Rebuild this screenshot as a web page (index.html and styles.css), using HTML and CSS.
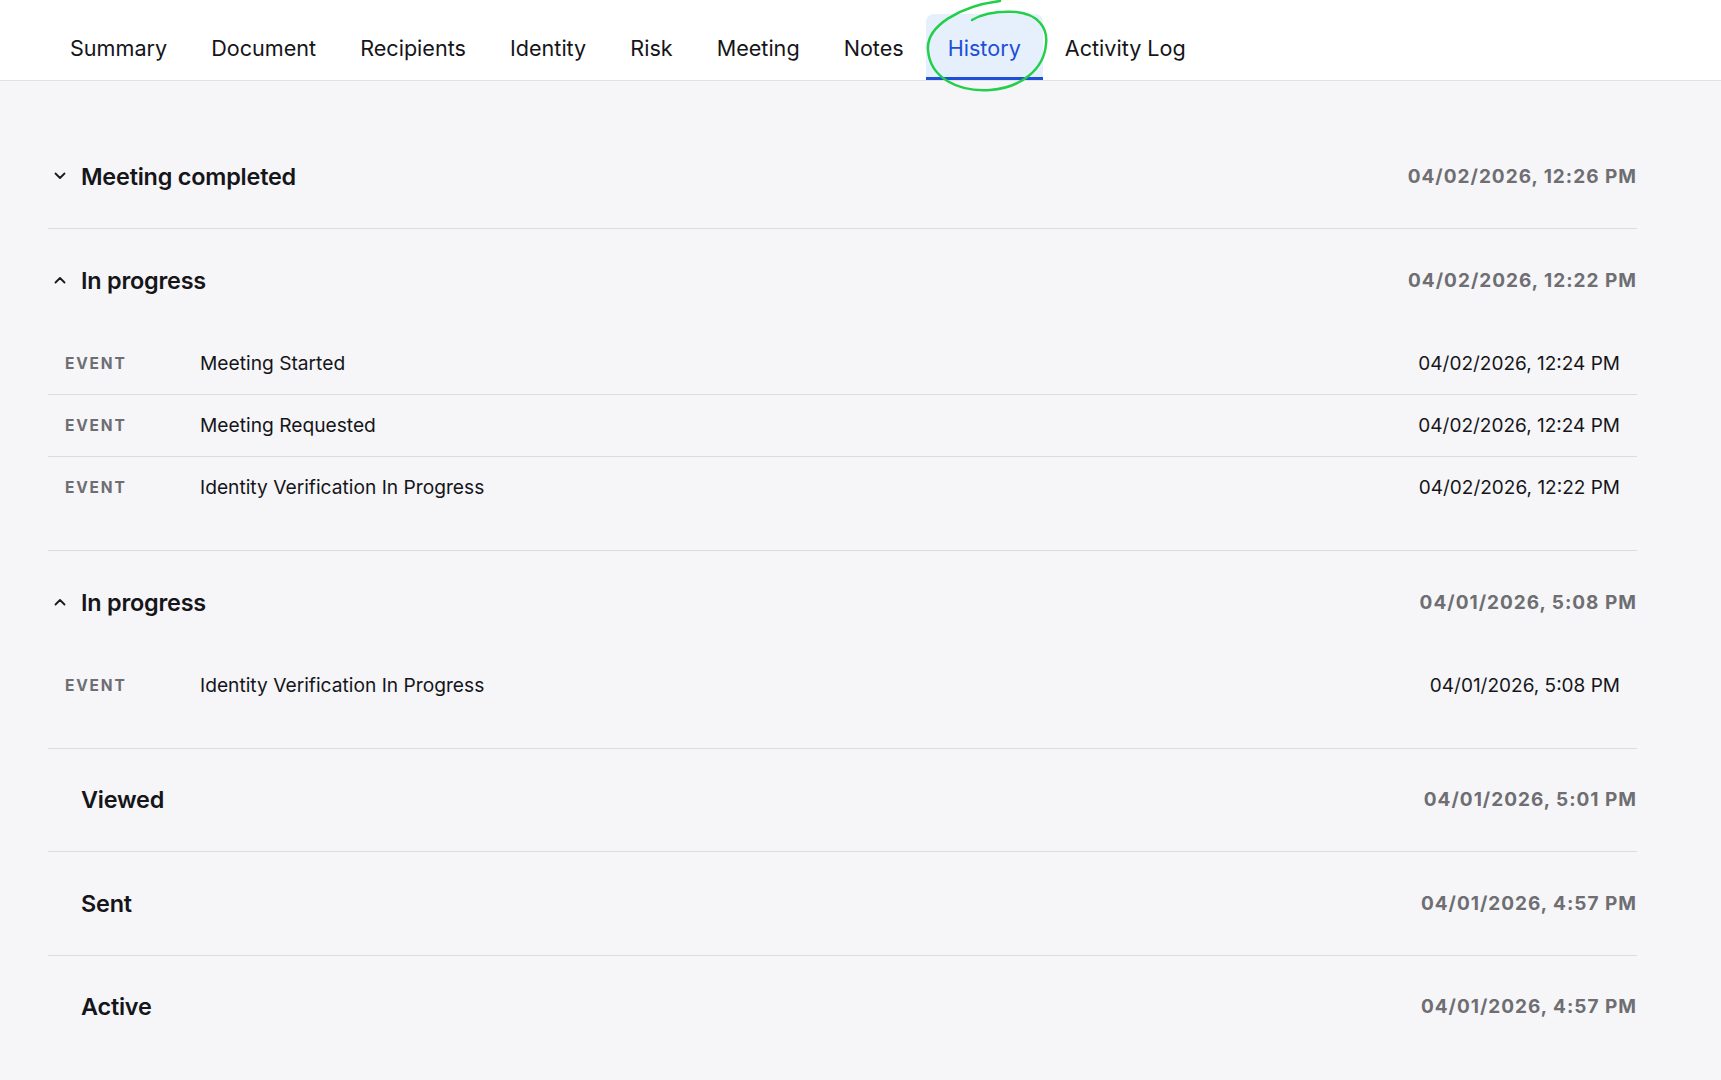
FILE: index.html
```html
<!DOCTYPE html>
<html>
  <head>
    <meta charset="utf-8">
    <title>History</title>
    <link rel="stylesheet" href="styles.css">
  </head>
  <body>
    <header class="tabs">
      <a class="tab">Summary</a>
      <a class="tab">Document</a>
      <a class="tab">Recipients</a>
      <a class="tab">Identity</a>
      <a class="tab">Risk</a>
      <a class="tab">Meeting</a>
      <a class="tab">Notes</a>
      <a class="tab active">History
        <svg class="scribble" viewBox="0 0 135 95" width="135" height="95">
          <path d="M52 20 C62 14 78 11 96 12 C118 14 128 28 126 44 C124 70 100 88 70 90 C38 92 10 78 8 50 C6 26 40 6 80 1" fill="none" stroke="#22cf4a" stroke-width="2.5" stroke-linecap="round"/>
        </svg>
      </a>
      <a class="tab">Activity Log</a>
    </header>

    <main class="history">
      <section class="stage">
        <div class="stage-head">
          <span class="chev">
            <svg viewBox="0 0 12 8" width="12" height="8"><path d="M1.5 1.5 L6 6 L10.5 1.5" fill="none" stroke="#1a1a1f" stroke-width="1.8" stroke-linecap="round" stroke-linejoin="round"/></svg>
          </span>
          <span class="stage-title">Meeting completed</span>
          <span class="stage-time">04/02/2026, 12:26 PM</span>
        </div>
      </section>

      <section class="stage open">
        <div class="stage-head">
          <span class="chev">
            <svg viewBox="0 0 12 8" width="12" height="8"><path d="M1.5 6.5 L6 2 L10.5 6.5" fill="none" stroke="#1a1a1f" stroke-width="1.8" stroke-linecap="round" stroke-linejoin="round"/></svg>
          </span>
          <span class="stage-title">In progress</span>
          <span class="stage-time">04/02/2026, 12:22 PM</span>
        </div>
        <div class="events">
          <div class="event">
            <span class="event-kind">EVENT</span>
            <span class="event-name">Meeting Started</span>
            <span class="event-time">04/02/2026, 12:24 PM</span>
          </div>
          <div class="event">
            <span class="event-kind">EVENT</span>
            <span class="event-name">Meeting Requested</span>
            <span class="event-time">04/02/2026, 12:24 PM</span>
          </div>
          <div class="event">
            <span class="event-kind">EVENT</span>
            <span class="event-name">Identity Verification In Progress</span>
            <span class="event-time">04/02/2026, 12:22 PM</span>
          </div>
        </div>
      </section>

      <section class="stage open">
        <div class="stage-head">
          <span class="chev">
            <svg viewBox="0 0 12 8" width="12" height="8"><path d="M1.5 6.5 L6 2 L10.5 6.5" fill="none" stroke="#1a1a1f" stroke-width="1.8" stroke-linecap="round" stroke-linejoin="round"/></svg>
          </span>
          <span class="stage-title">In progress</span>
          <span class="stage-time">04/01/2026, 5:08 PM</span>
        </div>
        <div class="events">
          <div class="event">
            <span class="event-kind">EVENT</span>
            <span class="event-name">Identity Verification In Progress</span>
            <span class="event-time">04/01/2026, 5:08 PM</span>
          </div>
        </div>
      </section>

      <section class="stage">
        <div class="stage-head">
          <span class="chev"></span>
          <span class="stage-title">Viewed</span>
          <span class="stage-time">04/01/2026, 5:01 PM</span>
        </div>
      </section>

      <section class="stage">
        <div class="stage-head">
          <span class="chev"></span>
          <span class="stage-title">Sent</span>
          <span class="stage-time">04/01/2026, 4:57 PM</span>
        </div>
      </section>

      <section class="stage last">
        <div class="stage-head">
          <span class="chev"></span>
          <span class="stage-title">Active</span>
          <span class="stage-time">04/01/2026, 4:57 PM</span>
        </div>
      </section>
    </main>
  </body>
</html>
```

FILE: styles.css
```css
body {
  margin: 0;
  font-family: Inter, "Noto Sans", sans-serif;
  background-color: #f6f6f8;
  color: #15151a;
}

.tabs {
  display: flex;
  align-items: flex-end;
  height: 80px;
  padding-left: 48px;
  background-color: #fff;
  border-bottom: 1px solid #e1e1e5;
}

.tab {
  position: relative;
  display: flex;
  align-items: center;
  height: 64px;
  padding: 2px 22px 0;
  font-size: 21.6px;
  color: #15151a;
  cursor: pointer;
}

.tab.active {
  height: 58px;
  padding-top: 5px;
  background-color: #e6f0fc;
  color: #1d4fd8;
  border-radius: 8px 8px 0 0;
  border-bottom: 3px solid #1d4fd8;
}

.scribble {
  position: absolute;
  left: -6px;
  top: -14px;
  pointer-events: none;
}

.history {
  padding: 44px 84px 0 48px;
}

.stage {
  border-bottom: 1px solid #dcdce0;
}

.stage.last {
  border-bottom: none;
}

.stage-head {
  display: flex;
  align-items: center;
  height: 102.5px;
}

.stage.open .stage-head {
  height: 103px;
}

.chev {
  display: flex;
  align-items: center;
  justify-content: center;
  width: 14px;
  margin: 0 14px 0 5px;
}

.stage-title {
  flex: 1;
  font-size: 23.4px;
  font-weight: 600;
  letter-spacing: -0.2px;
}

.stage-time {
  font-size: 19px;
  font-weight: 700;
  color: #6e6e73;
  letter-spacing: 1px;
}

.events {
  padding: 1px 0 32px;
}

.event {
  display: flex;
  align-items: center;
  height: 61px;
  padding: 0 17px;
  border-bottom: 1px solid #dcdce0;
}

.event:last-child {
  border-bottom: none;
}

.event-kind {
  width: 135px;
  font-size: 15.5px;
  font-weight: 700;
  letter-spacing: 1.8px;
  color: #6e6e73;
}

.event-name {
  flex: 1;
  font-size: 19.2px;
}

.event-time {
  font-size: 19px;
}
```
